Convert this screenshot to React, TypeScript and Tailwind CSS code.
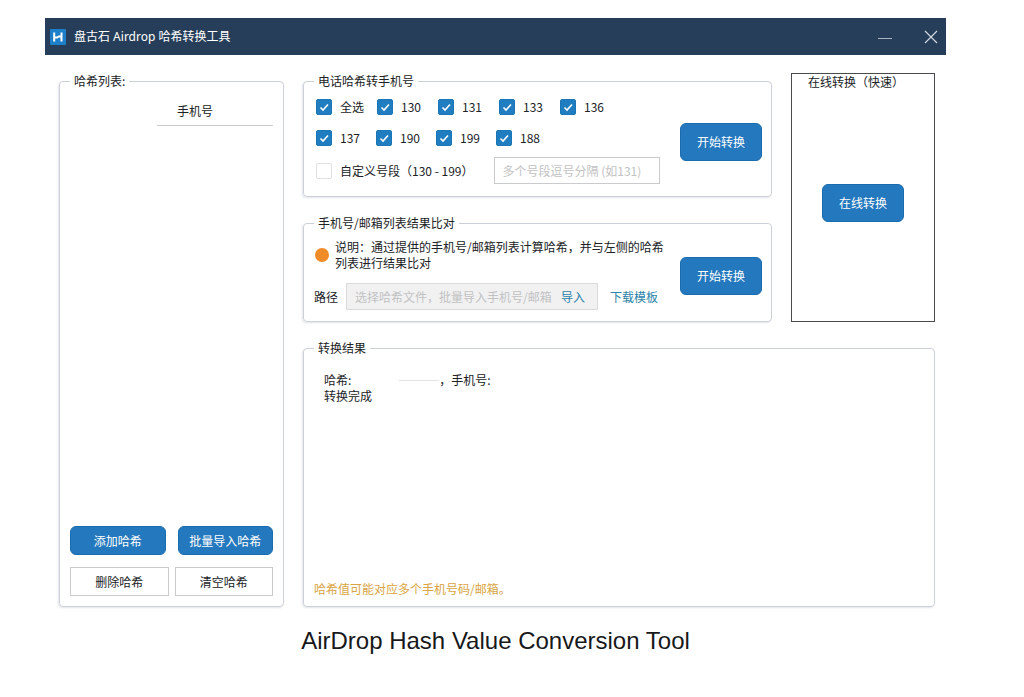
import type { ReactNode } from "react";

function Panel({ title, className = "", children }: { title: string; className?: string; children: ReactNode }) {
  return (
    <fieldset className={`min-w-0 rounded-sm border border-[#ccd0d8] shadow-[-1px_1px_2px_#e3e5ea] ${className}`}>
      <legend className="ml-2.5 px-1 leading-4">{title}</legend>
      {children}
    </fieldset>
  );
}

function Check({ label, checked = false }: { label: string; checked?: boolean }) {
  return (
    <label className="flex h-4 items-center gap-2 whitespace-nowrap">
      <span className="grid size-4 shrink-0">
        <input
          type="checkbox"
          defaultChecked={checked}
          className="peer col-start-1 row-start-1 size-4 appearance-none rounded-xs border border-[#dfe1e5] bg-white checked:border-[#1b76b9] checked:bg-[#1f7dc0]"
        />
        <svg
          viewBox="0 0 16 16"
          className="pointer-events-none invisible col-start-1 row-start-1 size-4 peer-checked:visible"
          fill="none"
          stroke="white"
          strokeWidth="1.6"
        >
          <path d="M4.5 8.5 7 11l5-5.5" />
        </svg>
      </span>
      {label}
    </label>
  );
}

function Primary({ children, className }: { children: ReactNode; className: string }) {
  return (
    <button type="button" className={`rounded-md border border-[#1b6cae] bg-[#2478bd] text-white ${className}`}>
      {children}
    </button>
  );
}

function Secondary({ children }: { children: ReactNode }) {
  return (
    <button type="button" className="h-[29px] flex-1 border border-[#c9cacc] bg-white">
      {children}
    </button>
  );
}

const firstRow = ["全选", "130", "131", "133", "136"];
const secondRow = ["137", "190", "199", "188"];

export default function App() {
  return (
    <div className="min-h-screen bg-white pt-[18px] pr-[78px] pb-8 pl-[45px] font-['Liberation_Sans','Noto_Sans_CJK_SC',sans-serif] text-[#202225]">
      <main className="font-['Noto_Sans_CJK_SC',sans-serif] text-xs">
        <header className="flex h-[37px] items-center bg-[#263e59] pr-2 pl-[5px] text-white">
          <svg viewBox="0 0 16 16" className="mr-2 size-4" aria-hidden="true">
            <rect width="16" height="16" rx="1" fill="#1e7fc9" />
            <path d="M4.2 3.5v9M11.5 3.5v9M4.2 8.5h3l1.5-1h2.8" stroke="white" strokeWidth="2" fill="none" />
          </svg>
          <h1 className="flex-1 font-['Noto_Sans','Noto_Sans_CJK_SC',sans-serif]">盘古石 Airdrop 哈希转换工具</h1>
          <button type="button" aria-label="最小化" className="mr-8">
            <svg viewBox="0 0 14 14" className="size-3.5" stroke="#a9b5c3" fill="none">
              <path d="M0 8.5h14" />
            </svg>
          </button>
          <button type="button" aria-label="关闭">
            <svg viewBox="0 0 14 14" className="size-3.5" stroke="#d5dce4" strokeWidth="1.1" fill="none">
              <path d="m1 1 12 12M13 1 1 13" />
            </svg>
          </button>
        </header>

        <div className="flex gap-[19px] pt-[18px] pr-[11px] pl-3.5">
          <Panel title="哈希列表:" className="w-[225px] shrink-0">
            <div className="flex flex-col px-2.5 pb-2.5">
              <div className="ml-[87px] border-b border-[#c9cbd0] pt-3.5 pb-1.5 pl-5 leading-4">手机号</div>
              <div className="min-h-[400px]" />
              <div className="flex gap-3">
                <Primary className="h-[29px] flex-1">添加哈希</Primary>
                <Primary className="h-[29px] flex-1">批量导入哈希</Primary>
              </div>
              <div className="mt-3 flex gap-1.5">
                <Secondary>删除哈希</Secondary>
                <Secondary>清空哈希</Secondary>
              </div>
            </div>
          </Panel>

          <div className="flex min-w-0 flex-1 flex-col gap-[18px]">
            <div className="flex gap-[19px]">
              <div className="flex min-w-0 flex-1 flex-col gap-[18px]">
                <Panel title="电话哈希转手机号" className="h-[124px]">
                  <div className="flex items-start justify-between pt-2.5 pr-[9px] pl-3">
                    <div className="flex flex-col gap-[15px]">
                      <div className="grid grid-cols-[repeat(5,61px)]">
                        {firstRow.map((item) => (
                          <Check key={item} label={item} checked />
                        ))}
                      </div>
                      <div className="grid grid-cols-[repeat(5,60px)]">
                        {secondRow.map((item) => (
                          <Check key={item} label={item} checked />
                        ))}
                      </div>
                      <div className="-mt-1 flex items-center gap-5">
                        <Check label="自定义号段（130 - 199）" />
                        <input
                          aria-label="自定义号段"
                          placeholder="多个号段逗号分隔 (如131)"
                          className="h-[27px] w-[166px] border border-[#c9cbcf] px-2 placeholder:text-[#c2c2c2]"
                        />
                      </div>
                    </div>
                    <Primary className="mt-6 h-[38px] w-[82px]">开始转换</Primary>
                  </div>
                </Panel>

                <Panel title="手机号/邮箱列表结果比对" className="h-[107px]">
                  <div className="flex items-start justify-between pt-2 pr-[9px] pl-2.5">
                    <div>
                      <div className="flex items-center gap-1.5 pl-px">
                        <span className="size-3.5 shrink-0 rounded-full bg-[#f08c28]" />
                        <p className="w-[330px] leading-4">
                          说明：通过提供的手机号/邮箱列表计算哈希，并与左侧的哈希列表进行结果比对
                        </p>
                      </div>
                      <div className="mt-3 flex items-center">
                        <label htmlFor="path" className="mr-2">路径</label>
                        <div className="flex h-[27px] w-[252px] items-center border border-[#d9dadc] bg-[#f1f1f2] pr-3 pl-2">
                          <input
                            id="path"
                            placeholder="选择哈希文件，批量导入手机号/邮箱"
                            className="min-w-0 flex-1 bg-transparent placeholder:text-[#c2c2c2]"
                          />
                          <button type="button" className="ml-2 text-[#2c83a8]">导入</button>
                        </div>
                        <a href="#template" className="ml-3 text-[#2c83a8]">下载模板</a>
                      </div>
                    </div>
                    <Primary className="mt-[18px] h-[38px] w-[82px]">开始转换</Primary>
                  </div>
                </Panel>
              </div>

              <section className="flex w-36 shrink-0 flex-col items-center border border-[#4a4b4e]">
                <h2 className="self-start pl-4 leading-4">在线转换（快速）</h2>
                <Primary className="mt-[94px] h-[38px] w-[82px]">在线转换</Primary>
              </section>
            </div>

            <Panel title="转换结果" className="flex-1">
              <div className="flex min-h-[249px] flex-col justify-between pt-4 pb-2">
                <div className="pl-5 leading-4">
                  <p className="flex">
                    <span>哈希:</span>
                    <span className="ml-12 h-px w-10 self-center bg-[#e2e3e6]" />
                    <span>，手机号:</span>
                  </p>
                  <p>转换完成</p>
                </div>
                <p className="pl-2.5 text-[#d9a441]">哈希值可能对应多个手机号码/邮箱。</p>
              </div>
            </Panel>
          </div>
        </div>
      </main>
      <p className="mt-[18px] text-center text-2xl text-[#17181a]">AirDrop Hash Value Conversion Tool</p>
    </div>
  );
}
